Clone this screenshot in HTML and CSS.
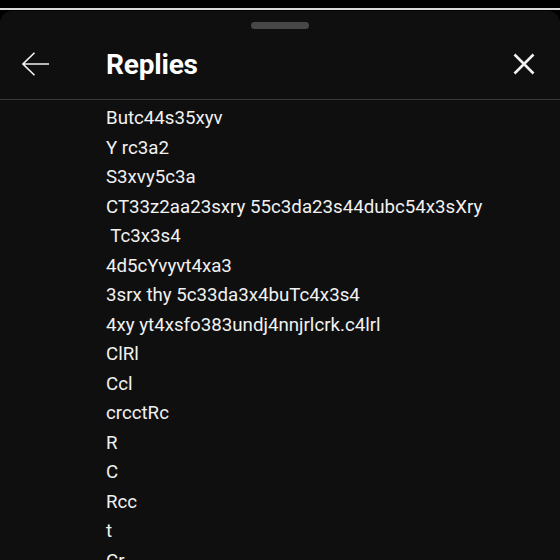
FILE: index.html
```html
<!DOCTYPE html>
<html lang="en">
<head>
  <meta charset="UTF-8" />
  <meta name="viewport" content="width=device-width, initial-scale=1.0" />
  <title>Replies</title>
  <link rel="stylesheet" href="styles.css">
</head>
<body>
  <div class="status"></div>
  <div class="rule"></div>

  <div class="sheet">
    <div class="handle"></div>

    <div class="header">
      <button class="icon back" aria-label="Back">
        <svg width="28" height="24" viewBox="0 0 28 24">
          <path d="M1 12 H27 M12.5 0.8 L1 12 L12.5 23.2" fill="none" stroke="#f1f1f1" stroke-width="1.6" />
        </svg>
      </button>
      <h1>Replies</h1>
      <button class="icon close" aria-label="Close">
        <svg width="22" height="22" viewBox="0 0 22 22">
          <path d="M1.5 1.5 L20.5 20.5 M20.5 1.5 L1.5 20.5" fill="none" stroke="#f1f1f1" stroke-width="2.6" />
        </svg>
      </button>
    </div>

    <div class="replies">
      <p>Butc44s35xyv</p>
      <p>Y rc3a2</p>
      <p>S3xvy5c3a</p>
      <p>CT33z2aa23sxry 55c3da23s44dubc54x3sXry</p>
      <p> Tc3x3s4</p>
      <p>4d5cYvyvt4xa3</p>
      <p>3srx thy 5c33da3x4buTc4x3s4</p>
      <p>4xy yt4xsfo383undj4nnjrlcrk.c4lrl</p>
      <p>ClRl</p>
      <p>Ccl</p>
      <p>crcctRc</p>
      <p>R</p>
      <p>C</p>
      <p>Rcc</p>
      <p>t</p>
      <p>Cr</p>
    </div>
  </div>
</body>
</html>
```

FILE: styles.css
```css
html, body {
  margin: 0;
  padding: 0;
  height: 560px;
  overflow: hidden;
  background: #000;
  font-family: Roboto, "Noto Sans", sans-serif;
  color: #f1f1f1;
}
.status {
  height: 8px;
  background: #000;
}
.rule {
  height: 2px;
  background: #d9d9d9;
  border-bottom: 1px solid #000;
}
.sheet {
  background: #0f0f0f;
  border-radius: 12px 12px 0 0;
  height: 560px;
  padding-top: 11px;
}
.handle {
  width: 58px;
  height: 7px;
  margin: 0 auto;
  border-radius: 4px;
  background: #474747;
}
.header {
  display: flex;
  align-items: center;
  height: 70px;
  padding: 0 25px 0 22px;
  border-bottom: 1px solid #3a3a3a;
}
.icon {
  display: flex;
  padding: 0;
  border: 0;
  background: none;
}
h1 {
  flex: 1;
  margin: 0 0 0 56px;
  font-size: 28px;
  font-weight: 700;
  color: #fff;
  letter-spacing: -0.2px;
}
.replies {
  padding: 4px 0 0 106px;
}
.replies p {
  margin: 0;
  font-size: 18.7px;
  line-height: 29.5px;
  white-space: pre;
}
```
